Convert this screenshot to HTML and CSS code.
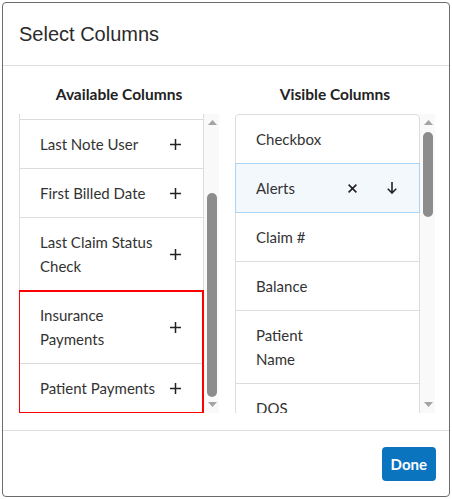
FILE: index.html
```html
<!DOCTYPE html>
<html lang="en">
<head>
<meta charset="utf-8">
<title>Select Columns</title>
<link rel="stylesheet" href="styles.css">
</head>
<body>
<div class="modal">
  <div class="modal-header">
    <h1 class="modal-title">Select Columns</h1>
  </div>
  <div class="modal-body">
    <section class="col">
      <h2 class="col-title">Available Columns</h2>
      <div class="scroller">
        <div class="viewport viewport--end">
          <div class="list">
            <div class="item"><span class="label">Last Note</span><span class="add"><svg width="11" height="11" viewBox="0 0 11 11"><path d="M5.5 0V11M0 5.5H11" stroke="#222" stroke-width="1.5" fill="none"/></svg></span></div>
            <div class="item"><span class="label">Last Note Date</span><span class="add"><svg width="11" height="11" viewBox="0 0 11 11"><path d="M5.5 0V11M0 5.5H11" stroke="#222" stroke-width="1.5" fill="none"/></svg></span></div>
            <div class="item"><span class="label">Last Note User</span><span class="add"><svg width="11" height="11" viewBox="0 0 11 11"><path d="M5.5 0V11M0 5.5H11" stroke="#222" stroke-width="1.5" fill="none"/></svg></span></div>
            <div class="item"><span class="label">First Billed Date</span><span class="add"><svg width="11" height="11" viewBox="0 0 11 11"><path d="M5.5 0V11M0 5.5H11" stroke="#222" stroke-width="1.5" fill="none"/></svg></span></div>
            <div class="item"><span class="label">Last Claim Status Check</span><span class="add"><svg width="11" height="11" viewBox="0 0 11 11"><path d="M5.5 0V11M0 5.5H11" stroke="#222" stroke-width="1.5" fill="none"/></svg></span></div>
            <div class="marked">
              <div class="item"><span class="label">Insurance Payments</span><span class="add"><svg width="11" height="11" viewBox="0 0 11 11"><path d="M5.5 0V11M0 5.5H11" stroke="#222" stroke-width="1.5" fill="none"/></svg></span></div>
              <div class="item"><span class="label">Patient Payments</span><span class="add"><svg width="11" height="11" viewBox="0 0 11 11"><path d="M5.5 0V11M0 5.5H11" stroke="#222" stroke-width="1.5" fill="none"/></svg></span></div>
            </div>
          </div>
        </div>
        <div class="sbar">
          <span class="sbar-btn sbar-btn--up"><svg width="9" height="5" viewBox="0 0 9 5"><path d="M0 5L4.5 0L9 5Z" fill="#a3a3a3"/></svg></span>
          <div class="sbar-track"><div class="sbar-thumb" style="margin-top:64px;height:204px"></div></div>
          <span class="sbar-btn sbar-btn--down"><svg width="9" height="5" viewBox="0 0 9 5"><path d="M0 0L4.5 5L9 0Z" fill="#a3a3a3"/></svg></span>
        </div>
      </div>
    </section>
    <section class="col">
      <h2 class="col-title">Visible Columns</h2>
      <div class="scroller">
        <div class="viewport">
          <div class="list">
            <div class="item item--first"><span class="vlabel">Checkbox</span></div>
            <div class="item item--selected"><span class="vlabel">Alerts</span>
              <span class="actions">
                <span class="act"><svg width="9" height="9" viewBox="0 0 9 9"><path d="M0.6 0.6L8.4 8.4M8.4 0.6L0.6 8.4" stroke="#222" stroke-width="1.6" fill="none"/></svg></span>
                <span class="act"><svg width="10" height="12" viewBox="0 0 10 12"><path d="M5 0V11M0.8 6.8L5 11L9.2 6.8" stroke="#222" stroke-width="1.6" fill="none"/></svg></span>
              </span>
            </div>
            <div class="item"><span class="vlabel">Claim #</span></div>
            <div class="item"><span class="vlabel">Balance</span></div>
            <div class="item"><span class="vlabel">Patient Name</span></div>
            <div class="item"><span class="vlabel">DOS</span></div>
            <div class="item"><span class="vlabel">Provider</span></div>
          </div>
        </div>
        <div class="sbar">
          <span class="sbar-btn sbar-btn--up"><svg width="9" height="5" viewBox="0 0 9 5"><path d="M0 5L4.5 0L9 5Z" fill="#a3a3a3"/></svg></span>
          <div class="sbar-track"><div class="sbar-thumb" style="margin-top:3px;height:85px"></div></div>
          <span class="sbar-btn sbar-btn--down"><svg width="9" height="5" viewBox="0 0 9 5"><path d="M0 0L4.5 5L9 0Z" fill="#a3a3a3"/></svg></span>
        </div>
      </div>
    </section>
  </div>
  <div class="modal-footer">
    <button class="btn-primary" type="button">Done</button>
  </div>
</div>
</body>
</html>
```

FILE: styles.css
```css
* { box-sizing: border-box; }

html, body {
  margin: 0;
  padding: 0;
  background: #fff;
}

body {
  font-family: "Lato", "Open Sans", sans-serif;
  color: #333;
}

.modal {
  margin: 2px 0 0 2px;
  width: 448px;
  border: 1px solid #6b6b6b;
  border-radius: 4px;
  background: #fff;
}

.modal-header {
  padding: 19px 16px 19px 16px;
  border-bottom: 1px solid #dedede;
}

.modal-title {
  margin: 0;
  font-family: "Liberation Sans", Arial, sans-serif;
  font-weight: 400;
  font-size: 20px;
  line-height: 24px;
  color: #2b2b2b;
}

.modal-body {
  display: flex;
  gap: 16px;
  padding: 18px 13px 17px 16px;
}

.col {
  width: 200px;
  flex: 0 0 200px;
}

.col-title {
  margin: 0 0 10px;
  text-align: center;
  font-size: 15.5px;
  line-height: 20px;
  font-weight: 700;
  color: #222;
}

.scroller {
  display: flex;
  height: 299px;
}

.viewport {
  flex: 1 1 auto;
  min-width: 0;
  overflow: hidden;
  display: flex;
  flex-direction: column;
}

.viewport--end {
  flex-direction: column-reverse;
}

.list {
  flex: 0 0 auto;
  padding-top: 1px;
}

.sbar {
  flex: 0 0 15px;
  display: flex;
  flex-direction: column;
  background: #f9f9f9;
}

.sbar-btn {
  flex: 0 0 15px;
  display: flex;
  justify-content: center;
  padding-left: 1px;
}

.sbar-btn--up {
  align-items: flex-start;
  padding-top: 6px;
}

.sbar-btn--down {
  align-items: flex-start;
  padding-top: 4px;
}

.sbar-track {
  flex: 1 1 auto;
  display: flex;
  flex-direction: column;
}

.sbar-thumb {
  width: 10px;
  margin-left: 3px;
  border-radius: 5px;
  background: #8c8c8c;
}

.item {
  display: flex;
  align-items: center;
  margin-top: -1px;
  padding: 12px 0 12px 20px;
  border: 1px solid #dcdcdc;
  font-size: 15px;
  line-height: 24px;
  color: #333;
  background: #fff;
}

.item--first {
  border-radius: 4px 4px 0 0;
}

.item--selected {
  position: relative;
  z-index: 1;
  background: #f3f8fd;
  border-color: #a9d4f4;
}

.label {
  flex: 0 0 122px;
}

.add {
  display: flex;
  margin-left: 8px;
}

.vlabel {
  flex: 0 0 84px;
}

.actions {
  display: flex;
  gap: 16px;
}

.act {
  width: 24px;
  height: 24px;
  display: flex;
  align-items: center;
  justify-content: center;
}

.marked {
  position: relative;
}

.marked::after {
  content: "";
  position: absolute;
  left: -1px;
  right: 0;
  top: 0;
  bottom: -1px;
  border: 2px solid #f00;
  pointer-events: none;
}

.modal-footer {
  display: flex;
  justify-content: flex-end;
  padding: 16px 13px 15px 16px;
  border-top: 1px solid #dedede;
}

.btn-primary {
  height: 34px;
  padding: 0 9px;
  border: none;
  border-radius: 4px;
  background: #0b74bf;
  color: #fff;
  font-family: "Lato", "Open Sans", sans-serif;
  font-size: 15px;
  font-weight: 700;
}
```
